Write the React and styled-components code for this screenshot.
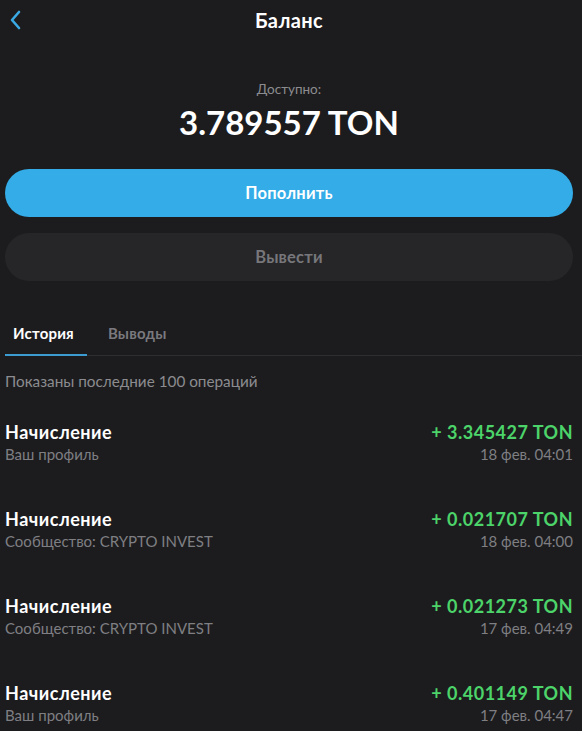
import styled, { createGlobalStyle } from "styled-components";

const rows = [
  { title: "Начисление", source: "Ваш профиль", amount: "+ 3.345427 TON", date: "18 фев. 04:01" },
  { title: "Начисление", source: "Сообщество: CRYPTO INVEST", amount: "+ 0.021707 TON", date: "18 фев. 04:00" },
  { title: "Начисление", source: "Сообщество: CRYPTO INVEST", amount: "+ 0.021273 TON", date: "17 фев. 04:49" },
  { title: "Начисление", source: "Ваш профиль", amount: "+ 0.401149 TON", date: "17 фев. 04:47" },
];

function App() {
  return (
    <>
      <Global />
      <Page>
        <Header>
          <Back aria-label="back">
            <svg width="12" height="20" viewBox="0 0 12 20">
              <path d="M10 2 L3 10 L10 18" fill="none" stroke="#3aa9e4" strokeWidth="2.6" strokeLinecap="round" strokeLinejoin="round" />
            </svg>
          </Back>
          <Title>Баланс</Title>
        </Header>

        <Balance>
          <Caption>Доступно:</Caption>
          <Amount>3.789557 TON</Amount>
        </Balance>

        <Actions>
          <Button $primary>Пополнить</Button>
          <Button>Вывести</Button>
        </Actions>

        <Tabs>
          <Tab $active>История</Tab>
          <Tab>Выводы</Tab>
        </Tabs>

        <Note>Показаны последние 100 операций</Note>

        <List>
          {rows.map((r, i) => (
            <Row key={i}>
              <Side>
                <RowTitle>{r.title}</RowTitle>
                <RowSub>{r.source}</RowSub>
              </Side>
              <Side $right>
                <RowAmount>{r.amount}</RowAmount>
                <RowSub>{r.date}</RowSub>
              </Side>
            </Row>
          ))}
        </List>
      </Page>
    </>
  );
}

const Global = createGlobalStyle`
  html, body {
    margin: 0;
    background: #1c1c1e;
    font-family: Lato, Inter, "Noto Sans", sans-serif;
    color: #fff;
  }
`;

const Page = styled.div`
  width: 582px;
  height: 731px;
  overflow: hidden;
  background: #1c1c1e;
  padding: 0 9px 0 5px;
  box-sizing: border-box;
`;

const Header = styled.div`
  position: relative;
  height: 40px;
  display: flex;
  align-items: center;
  justify-content: center;
`;

const Back = styled.div`
  position: absolute;
  left: 4px;
  top: 10px;
  display: flex;
`;

const Title = styled.div`
  font-size: 20px;
  font-weight: 700;
  letter-spacing: 0.4px;
  margin-top: -1px;
`;

const Balance = styled.div`
  display: flex;
  flex-direction: column;
  align-items: center;
  padding-top: 40px;
`;

const Caption = styled.div`
  font-size: 13.5px;
  color: #8c8c90;
  line-height: 18px;
`;

const Amount = styled.div`
  font-size: 33px;
  font-weight: 700;
  line-height: 40px;
  margin-top: 4px;
`;

const Actions = styled.div`
  display: flex;
  flex-direction: column;
  gap: 16px;
  margin-top: 27px;
`;

const Button = styled.div`
  height: 48px;
  border-radius: 24px;
  display: flex;
  align-items: center;
  justify-content: center;
  font-size: 16.5px;
  font-weight: 700;
  letter-spacing: 0.2px;
  background: ${(p) => (p.$primary ? "#33ace8" : "#262628")};
  color: ${(p) => (p.$primary ? "#fff" : "#77777b")};
`;

const Tabs = styled.div`
  display: flex;
  gap: 13px;
  margin-top: 38px;
  margin-right: -9px;
  border-bottom: 1px solid #2e2e31;
`;

const Tab = styled.div`
  padding: 5px 13px 12px 8px;
  font-size: 15px;
  font-weight: 700;
  letter-spacing: 0.2px;
  color: ${(p) => (p.$active ? "#fff" : "#7a7a7e")};
  border-bottom: 2px solid ${(p) => (p.$active ? "#3c9bd0" : "transparent")};
  margin-bottom: -1px;
`;

const Note = styled.div`
  font-size: 15.3px;
  color: #8c8c90;
  margin-top: 16px;
`;

const List = styled.div`
  display: flex;
  flex-direction: column;
  margin-top: 30px;
`;

const Row = styled.div`
  display: flex;
  justify-content: space-between;
  height: 87px;
`;

const Side = styled.div`
  display: flex;
  flex-direction: column;
  align-items: ${(p) => (p.$right ? "flex-end" : "flex-start")};
`;

const RowTitle = styled.div`
  font-size: 18px;
  font-weight: 700;
  letter-spacing: 0.5px;
  line-height: 24px;
`;

const RowAmount = styled(RowTitle)`
  color: #4cd46a;
`;

const RowSub = styled.div`
  font-size: 15px;
  color: #7f7f83;
  line-height: 20px;
`;

export default App;
